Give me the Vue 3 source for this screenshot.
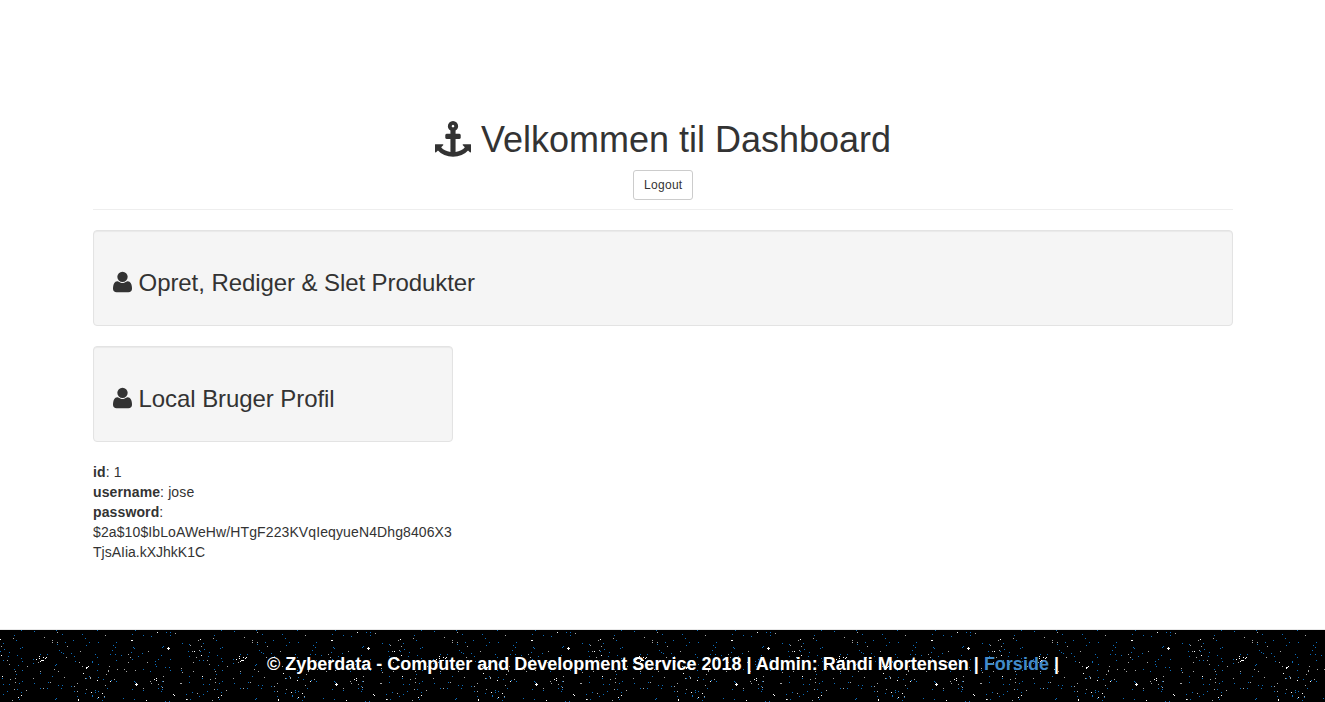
<script setup>
const userPath =
  'M1408 131q0 -120 -73 -189.5t-194 -69.5h-874q-121 0 -194 69.5t-73 189.5q0 53 3.5 103.5t14 109t26.5 108.5t43 97.5t62 81t85.5 53.5t111.5 20q9 0 42 -21.5t74.5 -48t108 -48t133.5 -21.5t133.5 21.5t108 48t74.5 48t42 21.5q61 0 111.5 -20t85.5 -53.5t62 -81t43 -97.5t26.5 -108.5t14 -109t3.5 -103.5zM1088 1024q0 -159 -112.5 -271.5t-271.5 -112.5t-271.5 112.5t-112.5 271.5t112.5 271.5t271.5 112.5t271.5 -112.5t112.5 -271.5z'
const anchorPath =
  'M960 1280q0 26 -19 45t-45 19t-45 -19t-19 -45t19 -45t45 -19t45 19t19 45zM1792 352v-352q0 -22 -20 -30q-8 -2 -12 -2q-12 0 -23 9l-93 93q-119 -143 -318.5 -226.5t-429.5 -83.5t-429.5 83.5t-318.5 226.5l-93 -93q-9 -9 -23 -9q-4 0 -12 2q-20 8 -20 30v352q0 14 9 23t23 9h352q22 0 30 -20q8 -19 -7 -35l-100 -100q67 -91 189.5 -153.5t271.5 -82.5v647h-192q-26 0 -45 19t-19 45v128q0 26 19 45t45 19h192v163q-58 34 -93 92.5t-35 128.5q0 106 75 181t181 75t181 -75t75 -181q0 -70 -35 -128.5t-93 -92.5v-163h192q26 0 45 -19t19 -45v-128q0 -26 -19 -45t-45 -19h-192v-647q149 20 271.5 82.5t189.5 153.5l-100 100q-15 16 -7 35q8 20 30 20h352q14 0 23 -9t9 -23z'

// Stars of one 200px wide sky tile, as "x,y" pairs
const sky = {
  blue: `21,0 34,1 56,0 14,5 16,10 22,17 20,18 3,13 4,19 0,21 9,22 8,26 3,30 17,25 21,28 22,31
    18,35 22,40 14,39 16,44 57,14 62,4 65,12 59,20 61,22 63,23 47,24 40,24 33,29 33,33 40,43
    55,35 56,34 52,46 64,47 2,48 3,54 3,64 7,61 9,54 22,51 19,53 17,59 21,62 34,53 40,58 47,58
    48,52 58,55 62,55 61,58 56,68 55,69 19,69
    97,0 82,4 85,8 73,10 89,12 98,12 86,15 71,23 74,26 75,31 95,24 92,31 92,32 97,27 98,34
    97,40 116,12 113,15 115,17 112,20 110,24 115,24 121,25 116,30 83,43 86,48 89,46 98,47
    103,49 111,50 116,51 107,58 98,61 95,60 95,62 85,63 92,65 92,66 97,68 71,56 74,61 77,66
    104,67 102,70 123,68 132,59 134,51 135,52
    135,0 132,4 143,5 151,6 166,2 170,2 170,5 163,16 162,17 133,17 134,18 131,22 142,23 161,25
    138,26 170,29 158,29 132,29 155,31 156,36 165,37 169,37 170,40 143,39 150,41 155,34
    182,13 189,14 188,21 189,26 199,30 181,40 189,46 189,52 162,51 161,56 162,59 158,58
    143,60 161,61 192,62 186,64 199,66 190,69 169,71 165,71 134,69`,
  grey: `1,16 13,8 44,7 57,2 67,16 52,10 52,12 66,27 57,12 9,34 7,30 38,32 27,36 33,48 15,41
    15,48 15,52 10,49 14,59 26,60 12,70 54,39 58,41 40,41 50,52 64,47 43,58 56,72
    80,21 79,32 82,36 86,37 85,48 90,47 90,48 109,36 108,40 108,41 106,44 117,39 114,49
    105,55 77,53 74,56 77,61 86,59 91,62 104,66 105,5 128,24 130,27 128,32 124,39
    148,21 147,32 135,40 126,41 163,46 150,51 151,53 163,51 158,54
    162,57 143,58 181,38 182,42 193,41 180,53 181,53 190,15 198,10 192,21
    199,20 196,27 193,32 197,63 175,3 187,69`,
  white: `0,9 1,25 2,46 39,26 39,28 42,30 43,27 45,28 46,27 43,30 41,30 40,31 36,29 21,65
    18,67 86,38 87,37 88,36 86,37 83,43 110,51 97,50 91,62 102,63 98,67 78,69 78,70
    131,10 132,10 157,2 194,21 154,49 156,48 156,50 173,64 174,65 146,70 186,69
    167,18 168,18 169,18 168,17 168,19 135,54 136,54 137,54 136,53 136,55`,
}
const toPath = (list) =>
  list.trim().split(/\s+/).map((p) => `M${p.replace(',', ' ')}h1v1h-1z`).join('')
const layers = Object.entries(sky).map(([tone, list]) => ({ tone, d: toPath(list) }))

const panels = [
  { title: 'Opret, Rediger & Slet Produkter', wide: true },
  { title: 'Local Bruger Profil', wide: false },
]
</script>

<template>
  <div class="page">
    <main class="container">
      <header class="page-header">
        <h1>
          <svg class="icon anchor" viewBox="0 -1536 1792 1792"><path :d="anchorPath" transform="scale(1,-1)" /></svg>
          Velkommen til Dashboard
        </h1>
        <button class="btn" type="button">Logout</button>
      </header>

      <section v-for="p in panels" :key="p.title" class="well" :class="{ narrow: !p.wide }">
        <h3>
          <svg class="icon user" viewBox="0 -1536 1408 1792" preserveAspectRatio="none"><path :d="userPath" transform="scale(1,-1)" /></svg>
          {{ p.title }}
        </h3>
      </section>

      <div class="profile">
        <div class="row"><strong>id</strong>: 1</div>
        <div class="row"><strong>username</strong>: jose</div>
        <div class="row"><strong>password</strong>:</div>
        <div class="hash">$2a$10$IbLoAWeHw/HTgF223KVqIeqyueN4Dhg8406X3</div>
        <div>TjsAIia.kXJhkK1C</div>
      </div>
    </main>

    <footer class="footer">
      <svg class="sky" aria-hidden="true" shape-rendering="crispEdges">
        <defs>
          <pattern id="stars" width="200" height="200" patternUnits="userSpaceOnUse">
            <path v-for="l in layers" :key="l.tone" :class="l.tone" :d="l.d" />
          </pattern>
        </defs>
        <rect width="100%" height="100%" fill="url(#stars)" />
      </svg>
      <p class="credits">
        © Zyberdata - Computer and Development Service 2018 | Admin: Randi Mortensen | <a class="link">Forside</a> |
      </p>
    </footer>
  </div>
</template>

<style>
body {
  margin: 0;
  background: #fff;
}
</style>

<style scoped>
.page,
.page * {
  box-sizing: border-box;
}
.page {
  display: flex;
  flex-direction: column;
  height: 702px;
  overflow: hidden;
  font: 14px/20px "Liberation Sans", Arial, sans-serif;
  color: #333;
}
.container {
  flex: 1;
  width: 1170px;
  margin-left: 78px;
  padding: 120px 15px 0;
}
.page-header {
  margin-bottom: 20px;
  padding-bottom: 9px;
  border-bottom: 1px solid #eee;
  text-align: center;
}
h1,
h3 {
  font-weight: 500;
  line-height: 1.1;
}
h1 {
  margin: 0 0 10px;
  font-size: 36px;
}
h3 {
  margin: 20px 0 10px;
  font-size: 24px;
  letter-spacing: -0.08px;
}
.icon {
  display: inline-block;
  height: 1em;
  vertical-align: -0.142857em;
  fill: currentColor;
}
.anchor {
  width: 1em;
}
.user {
  width: 19px;
}
.btn {
  display: block;
  width: 60px;
  height: 30px;
  margin: 0 auto;
  padding: 5px 0 5px 10px;
  border: 1px solid #ccc;
  border-radius: 3px;
  background: #fff;
  color: #333;
  font: 12px/18px "Liberation Sans", Arial, sans-serif;
  letter-spacing: 0.3px;
  text-align: left;
}
.well {
  display: flow-root;
  margin-bottom: 20px;
  padding: 19px;
  border: 1px solid #e3e3e3;
  border-radius: 4px;
  background: #f5f5f5;
  box-shadow: inset 0 1px 1px rgba(0, 0, 0, 0.05);
}
.narrow {
  width: 360px;
}
.profile {
  width: 360px;
}
.row {
  letter-spacing: 0.12px;
}
.hash {
  letter-spacing: 0.11px;
  white-space: nowrap;
}
.footer {
  position: relative;
  height: 73px;
  border-top: 1px solid #e7e7e7;
  background: #000;
  background-clip: padding-box;
}
.sky {
  position: absolute;
  inset: 0;
  width: 100%;
  height: 100%;
}
.blue {
  fill: #0d6ebd;
}
.grey {
  fill: #a8a8a8;
}
.white {
  fill: #fff;
}
.credits {
  position: relative;
  margin: 0;
  padding: 24px 0 0 1px;
  color: #fff;
  font-size: 18px;
  font-weight: 700;
  line-height: 20px;
  text-align: center;
}
.link {
  color: #428bca;
}
</style>
